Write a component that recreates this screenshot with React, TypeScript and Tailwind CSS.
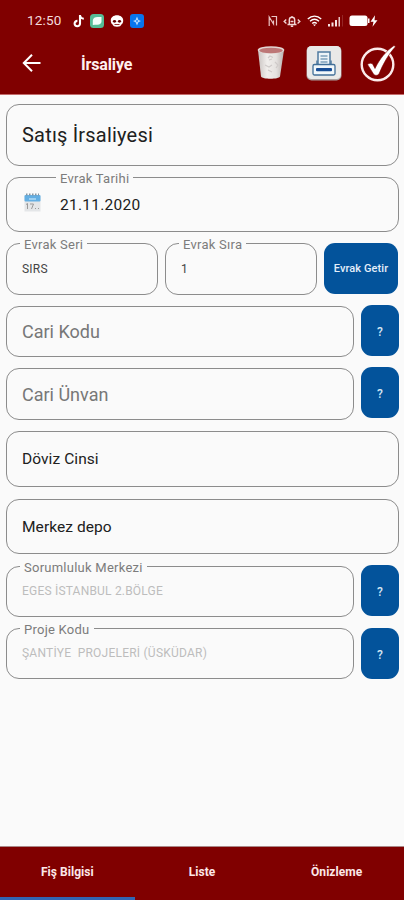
import React from 'react';
import clsx from 'clsx';

interface FieldProps {
  label?: string;
  className?: string;
  labelClass?: string;
  children: React.ReactNode;
}

const Field: React.FC<FieldProps> = ({ label, className, labelClass = 'left-[13px]', children }) => (
  <div className={clsx('relative flex items-center rounded-[13px] border border-[#8c8c8c] pl-[15px]', className)}>
    {label && (
      <span className={clsx('absolute -top-[6px] bg-[#fafafa] pl-[4px] pr-[4px] text-[13px] leading-[14px] tracking-[0.25px] whitespace-nowrap text-[#7c7c7c]', labelClass)}>
        {label}
      </span>
    )}
    {children}
  </div>
);

const LookupButton = () => (
  <button className="h-[51px] w-[38px] rounded-[11px] bg-[#03539b] pt-[3px] text-[12px] font-medium text-[#d5e5f3]">?</button>
);

const StatusBar = () => (
  <div className="flex h-[41px] items-center pl-[27px] pr-[25px] text-white">
    <span className="w-[46px] text-[13.5px] tracking-[0.2px] text-[#f3dddd]">12:50</span>
    <svg width="12" height="14" viewBox="0 0 12 14" fill="none" className="mr-[5px]">
      <path d="M7 1v8.6a2.7 2.7 0 1 1-2.6-2.7M7 1.6c.4 2 1.8 3 3.8 3.1" stroke="#fff" strokeWidth="2.1" />
    </svg>
    <svg width="14" height="14" viewBox="0 0 14 14" className="mr-[6px]">
      <rect width="14" height="14" rx="3.5" fill="#55bd96" />
      <path d="M2.8 11V6.5C3 4 5 3 7.5 3h4v4.500c0 2-1.600 3.200-4 3.200H5z" fill="#f1fff9" />
    </svg>
    <svg width="14" height="14" viewBox="0 0 14 14" className="mr-[6px]">
      <path d="M7 1.200c3.600 0 6.200 2.200 6.200 5.200 0 1.800-.5 3-1.600 3.900C11 12 9.500 12.800 7 12.800S3 12 2.400 10.300C1.300 9.400.8 8.200.8 6.400c0-3 2.600-5.200 6.200-5.200z" fill="#fff" />
      <ellipse cx="4.500" cy="7.300" rx="1.600" ry="1.400" fill="#650000" />
      <ellipse cx="9.500" cy="7.300" rx="1.600" ry="1.400" fill="#650000" />
      <path d="M4.500 10.500h5" stroke="#800000" strokeWidth=".8" />
    </svg>
    <svg width="14" height="14" viewBox="0 0 14 14">
      <rect width="14" height="14" rx="3" fill="#0875ed" />
      <path d="M7 2.500 8.400 6 11 7 8.400 8.200 7 11.500 5.600 8.200 3 7l2.600-1z" fill="#b9ddff" />
      <path d="M7 5.500 8 7 7 8.500 6 7z" fill="#0875ed" />
    </svg>

    <div className="ml-auto flex items-center">
      <svg width="10" height="12" viewBox="0 0 10 12" fill="none" stroke="#eac5c5" strokeWidth="1.200" className="mr-[5px]">
        <path d="M1.200 11V2l4.300 7M1.200 2 5.500 9V5.500M3.500 1.500h5V10.500" />
      </svg>
      <svg width="18" height="12" viewBox="0 0 18 12" fill="none" stroke="#f1d5d5" strokeWidth="1.400" className="mr-[6px]">
        <path d="M3.200 4.500 1.200 6.500l2.200 2M14.800 4.500l2 2-2.200 2M4.500 9.500h9M6.300 9V5a2.700 2.700 0 0 1 5.400 0v4M7.800 11.300h2.400M9 1v1.500M7.500 6.500h3" />
      </svg>
      <svg width="15" height="12" viewBox="0 0 15 12" fill="none" stroke="#fff" strokeWidth="1.400" className="mr-[6px]">
        <path d="M.8 4c4-3.800 9.400-3.800 13.400 0M3 6.300c2.800-2.500 6.200-2.500 9 0M5.200 8.500c1.400-1.200 3.200-1.200 4.600 0" />
        <path d="m6 9.500 1.500 1.800L9 9.500z" fill="#fff" stroke="none" />
      </svg>
      <svg width="15" height="12" viewBox="0 0 15 12" className="mr-[6px]">
        <path d="M0 9h2v2.500H0zM3.500 7.500h2v4h-2zM7 5h2v6.500H7z" fill="#f6e2e2" />
        <path d="M10.500 2h1.500v9.500h-1.500z" fill="#e9c5c5" />
        <path d="M14 0h.8v11.500H14z" fill="#9b3030" />
      </svg>
      <svg width="30" height="12" viewBox="0 0 30 12">
        <rect x=".5" y=".5" width="18" height="10.500" rx="2.500" fill="#fff" />
        <path d="M19 3.500h1.500v4.500H19z" fill="#fff" />
        <path d="M26 .3 21.500 6.800h3l-1 5 5-6.600h-3z" fill="#fff" />
      </svg>
    </div>
  </div>
);

const TrashIcon = () => (
  <svg width="28" height="36" viewBox="0 0 28 36">
    <defs>
      <linearGradient id="bin" x1="0" x2="1">
        <stop offset="0" stopColor="#c9c3c1" />
        <stop offset=".35" stopColor="#f1eeec" />
        <stop offset=".7" stopColor="#e5e2e0" />
        <stop offset="1" stopColor="#b9b1af" />
      </linearGradient>
    </defs>
    <path d="M1 5 4 31.500c1 3 18 3 19 0L27 5z" fill="url(#bin)" />
    <ellipse cx="14" cy="5" rx="13.300" ry="3.800" fill="#e2d6d3" />
    <ellipse cx="14" cy="5.500" rx="11.800" ry="2.800" fill="#bd7777" />
    <path d="m11 13 2-2 3 1.500M15 14l-3 1M8 20l4 2 3-2M18 17l3 3-2 3M11 25l4 2" stroke="#cfcac9" strokeWidth="1.200" fill="none" />
  </svg>
);

const PrinterIcon = () => (
  <svg width="36" height="36" viewBox="0 0 36 36">
    <rect x=".5" y="1" width="35" height="34.500" rx="5" fill="#aaa09f" />
    <rect x="1" y="1" width="34" height="33" rx="4.500" fill="#e9e9e8" />
    <path d="M12 20V7h12v13" fill="#edf4f8" stroke="#507ba0" strokeWidth="1.500" />
    <path d="M14.500 11h7M14.500 14h7M14.500 17h7" stroke="#7da0bb" strokeWidth="1.300" />
    <path d="M11 15.500v4M25 15.500v4" stroke="#507ba0" strokeWidth="1.500" />
    <rect x="7" y="19.500" width="22" height="10.500" rx="1.500" fill="#f1f7fa" stroke="#416f98" strokeWidth="1.300" />
    <rect x="10" y="23" width="16" height="3.300" rx="1" fill="#174d96" />
  </svg>
);

const CheckIcon = () => (
  <svg width="36" height="38" viewBox="0 0 36 38" fill="none">
    <circle cx="17.500" cy="20.500" r="15.800" stroke="#fbeaea" strokeWidth="2.400" />
    <path d="M7.500 20.500c2-1.800 4.500-1.600 5.500.2l2 3.800C19.500 15 26 7 34 1.500l1.500 1.200C28.500 10 23 20 19 30c-1.500 1.900-4.500 1.900-5.500 0z" fill="#fff" stroke="#800000" strokeWidth=".6" />
  </svg>
);

export default function App() {
  return (
    <div className="flex h-[900px] w-[404px] flex-col overflow-hidden bg-[#fafafa] font-[Roboto,sans-serif] text-[#202020]">
      <header className="h-[95px] shrink-0 border-b border-[#c36b6b] bg-[#800000]">
        <StatusBar />
        <div className="flex h-[44px] items-center pl-[22px] pr-[8px]">
          <svg width="20" height="20" viewBox="0 0 20 20" fill="none" stroke="#fff" strokeWidth="2">
            <path d="M18.500 10H1.800M10 1.800 1.800 10l8.200 8.200" />
          </svg>
          <h1 className="ml-[39px] pt-[3px] text-[16px] font-bold tracking-[-0.15px] text-[#fff0f0]">İrsaliye</h1>
          <div className="ml-auto flex items-center pb-px">
            <TrashIcon />
            <div className="ml-[21px] mr-[18px]"><PrinterIcon /></div>
            <CheckIcon />
          </div>
        </div>
      </header>

      <main className="flex flex-1 flex-col pl-[6px] pr-[5px] pt-[9px]">
        <Field className="h-[62px] text-[20px] tracking-[0.2px]">Satış İrsaliyesi</Field>

        <Field label="Evrak Tarihi" labelClass="left-[49px]" className="mt-[11px] h-[55px] pt-[2px]">
          <svg width="17" height="19" viewBox="0 0 17 19" className="ml-[2px] mr-[19px] mb-[6px]">
            <rect x=".5" y="3" width="16" height="15.500" fill="#e4e6e8" />
            <rect x=".5" y="2" width="16" height="6.500" rx="1" fill="#64afe3" />
            <path d="M2 1.500h1.500M5 1.500h1.500M8 1.500h1.500M11 1.500h1.500M14 1.500h1" stroke="#8796a1" strokeWidth="2" />
            <path d="M5 6h7" stroke="#b0dbf6" strokeWidth="1.500" />
            <path d="m2 11.500 1.500-1V16M6 11h3.500L7.500 16M11 15.500h1M14 15.500h1" stroke="#999" fill="none" />
          </svg>
          <span className="text-[15.5px] tracking-[0.25px]">21.11.2020</span>
        </Field>

        <div className="mt-[11px] flex">
          <Field label="Evrak Seri" className="h-[52px] w-[152px] text-[12px] tracking-[0.2px] text-[#444]">SIRS</Field>
          <Field label="Evrak Sıra" className="ml-[7px] h-[52px] w-[152px] text-[12px] text-[#444]">1</Field>
          <button className="ml-[7px] h-[51px] w-[74px] rounded-[11px] bg-[#03539b] pt-[2px] text-[11px] font-medium tracking-[0.1px] whitespace-nowrap text-[#e3effa]">
            Evrak Getir
          </button>
        </div>

        <div className="mt-[10px] flex justify-between">
          <Field className="mt-px h-[51px] w-[348px] text-[18px] text-[#777]">Cari Kodu</Field>
          <LookupButton />
        </div>

        <div className="mt-[10px] flex justify-between">
          <Field className="mt-px h-[52px] w-[348px] text-[18px] text-[#777]">Cari Ünvan</Field>
          <LookupButton />
        </div>

        <Field className="mt-[11px] h-[56px] pt-[2px] text-[15.5px] tracking-[0.07px]">Döviz Cinsi</Field>
        <Field className="mt-[12px] h-[55px] pt-[2px] text-[15.5px] tracking-[0.07px]">Merkez depo</Field>

        <div className="mt-[11px] flex justify-between">
          <Field label="Sorumluluk Merkezi" className="mt-px h-[51px] w-[348px] pb-[2px] text-[12px] tracking-[0.2px] text-[#bdbdbd]">EGES İSTANBUL 2.BÖLGE</Field>
          <LookupButton />
        </div>

        <div className="mt-[11px] flex justify-between">
          <Field label="Proje Kodu" className="h-[51px] w-[348px] pb-px text-[12px] tracking-[0.23px] whitespace-pre text-[#bdbdbd]">{'ŞANTİYE  PROJELERİ (ÜSKÜDAR)'}</Field>
          <LookupButton />
        </div>
      </main>

      <nav className="grid h-[54px] shrink-0 grid-cols-3 border-t border-[#a88] bg-[#800000] text-center text-[12px] font-bold tracking-[0.05px] text-[#fce8e8]">
        <div className="border-b-[3px] border-[#3266b3] pt-[16px]">Fiş Bilgisi</div>
        <div className="pt-[16px]">Liste</div>
        <div className="pt-[16px]">Önizleme</div>
      </nav>
    </div>
  );
}
